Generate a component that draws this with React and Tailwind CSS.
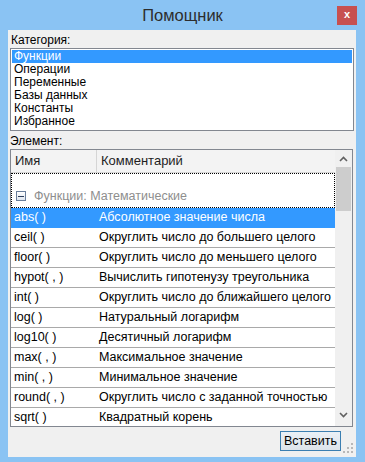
import React from 'react';

const categories = ['Функции', 'Операции', 'Переменные', 'Базы данных', 'Константы', 'Избранное'];

const items = [
  ['abs( )', 'Абсолютное значение числа'],
  ['ceil( )', 'Округлить число до большего целого'],
  ['floor( )', 'Округлить число до меньшего целого'],
  ['hypot( , )', 'Вычислить гипотенузу треугольника'],
  ['int( )', 'Округлить число до ближайшего целого'],
  ['log( )', 'Натуральный логарифм'],
  ['log10( )', 'Десятичный логарифм'],
  ['max( , )', 'Максимальное значение'],
  ['min( , )', 'Минимальное значение'],
  ['round( , )', 'Округлить число с заданной точностью'],
  ['sqrt( )', 'Квадратный корень'],
];

const Chevron = ({ down }) => (
  <svg width="9" height="6" viewBox="0 0 9 6" className={down ? 'rotate-180' : ''}>
    <path d="M1 5 L4.5 1.5 L8 5" fill="none" stroke="#606060" strokeWidth="1.6" />
  </svg>
);

const App = () => {
  return (
    <div className="w-[365px] h-[462px] bg-[#8ac3f3] flex flex-col font-['Liberation_Sans',Arial,sans-serif] text-[12px] text-black select-none">
      {/* Title bar */}
      <div className="h-[30px] relative flex items-center justify-center shrink-0">
        <span className="text-[16.5px] text-[#2d2d2d] pt-[1px]">Помощник</span>
        <div className="absolute left-[337px] top-[6px] w-[20px] h-[19px] bg-[#c75050] flex items-center justify-center text-white text-[11px] font-bold leading-none pb-[2px]">
          x
        </div>
      </div>

      {/* Client area */}
      <div className="flex-1 ml-[8px] mr-[9px] mb-[5px] bg-[#f0f0f0] flex flex-col px-[2px] relative">
        <div className="h-[18px] flex items-center pl-[1px] pt-[2px]">Категория:</div>

        <div className="h-[83px] border border-[#828790] bg-white pt-[1px] px-[1px] shrink-0">
          {categories.map((c, i) => (
            <div
              key={c}
              className={`h-[13px] leading-[13px] pl-[2px] ${i === 0 ? 'bg-[#3399ff] text-white' : ''}`}
            >
              {c}
            </div>
          ))}
        </div>

        <div className="h-[18px] flex items-center pt-[1px]">Элемент:</div>

        {/* Grid */}
        <div className="h-[278px] border border-[#828790] bg-white flex shrink-0 overflow-hidden mr-[1px]">
          <div className="flex-1 flex flex-col overflow-hidden">
            <div className="h-[23px] flex border-b border-[#d5d5d5] bg-[#f3f3f3] shrink-0 text-[13px] text-[#1e1e1e]">
              <div className="w-[86px] border-r border-[#d5d5d5] pl-[4px] flex items-center">Имя</div>
              <div className="flex-1 pl-[4px] flex items-center">Комментарий</div>
            </div>

            <div className="h-[35px] shrink-0 border border-dotted border-black flex items-end pb-[5px] pl-[4px] gap-[8px] text-[#8e8e8e] text-[12.5px]">
              <div className="w-[10px] h-[10px] border border-[#6a7f9c] bg-gradient-to-b from-white to-[#dfe6ef] flex items-center justify-center mb-[1px]">
                <div className="w-[6px] h-[1px] bg-[#2c3e5c]" />
              </div>
              <span className="leading-none">Функции: Математические</span>
            </div>

            {items.map(([name, comment], i) => (
              <div
                key={name}
                className={`h-[20px] shrink-0 flex items-center border-b text-[12.5px] ${i === 0 ? 'bg-[#3399ff] text-white border-[#3399ff]' : 'border-[#a9a9a9]'}`}
              >
                <div className="w-[87px] pl-[3px]">{name}</div>
                <div className="flex-1 pl-[1px] whitespace-nowrap">{comment}</div>
              </div>
            ))}
          </div>

          {/* Scrollbar */}
          <div className="w-[17px] bg-[#f0f0f0] flex flex-col items-center shrink-0">
            <div className="h-[17px] w-full flex items-center justify-center">
              <Chevron />
            </div>
            <div className="w-[15px] h-[44px] bg-[#cdcdcd]" />
            <div className="flex-1" />
            <div className="h-[20px] w-full flex items-center justify-center pb-[2px]">
              <Chevron down />
            </div>
          </div>
        </div>

        {/* Footer */}
        <div className="flex justify-end pr-[13px] pt-[4px]">
          <button className="w-[61px] h-[20px] border border-[#3c7fb1] bg-gradient-to-b from-[#eaf0f6] to-[#dde3ea] text-[12.5px] text-black flex items-center justify-center">
            Вставить
          </button>
        </div>

        <svg className="absolute right-[3px] bottom-[4px]" width="10" height="10" viewBox="0 0 10 10">
          <g fill="#b8b8b8">
            <rect x="8" y="0" width="2" height="2" />
            <rect x="4" y="4" width="2" height="2" />
            <rect x="8" y="4" width="2" height="2" />
            <rect x="0" y="8" width="2" height="2" />
            <rect x="4" y="8" width="2" height="2" />
            <rect x="8" y="8" width="2" height="2" />
          </g>
        </svg>
      </div>
    </div>
  );
};

export default App;
